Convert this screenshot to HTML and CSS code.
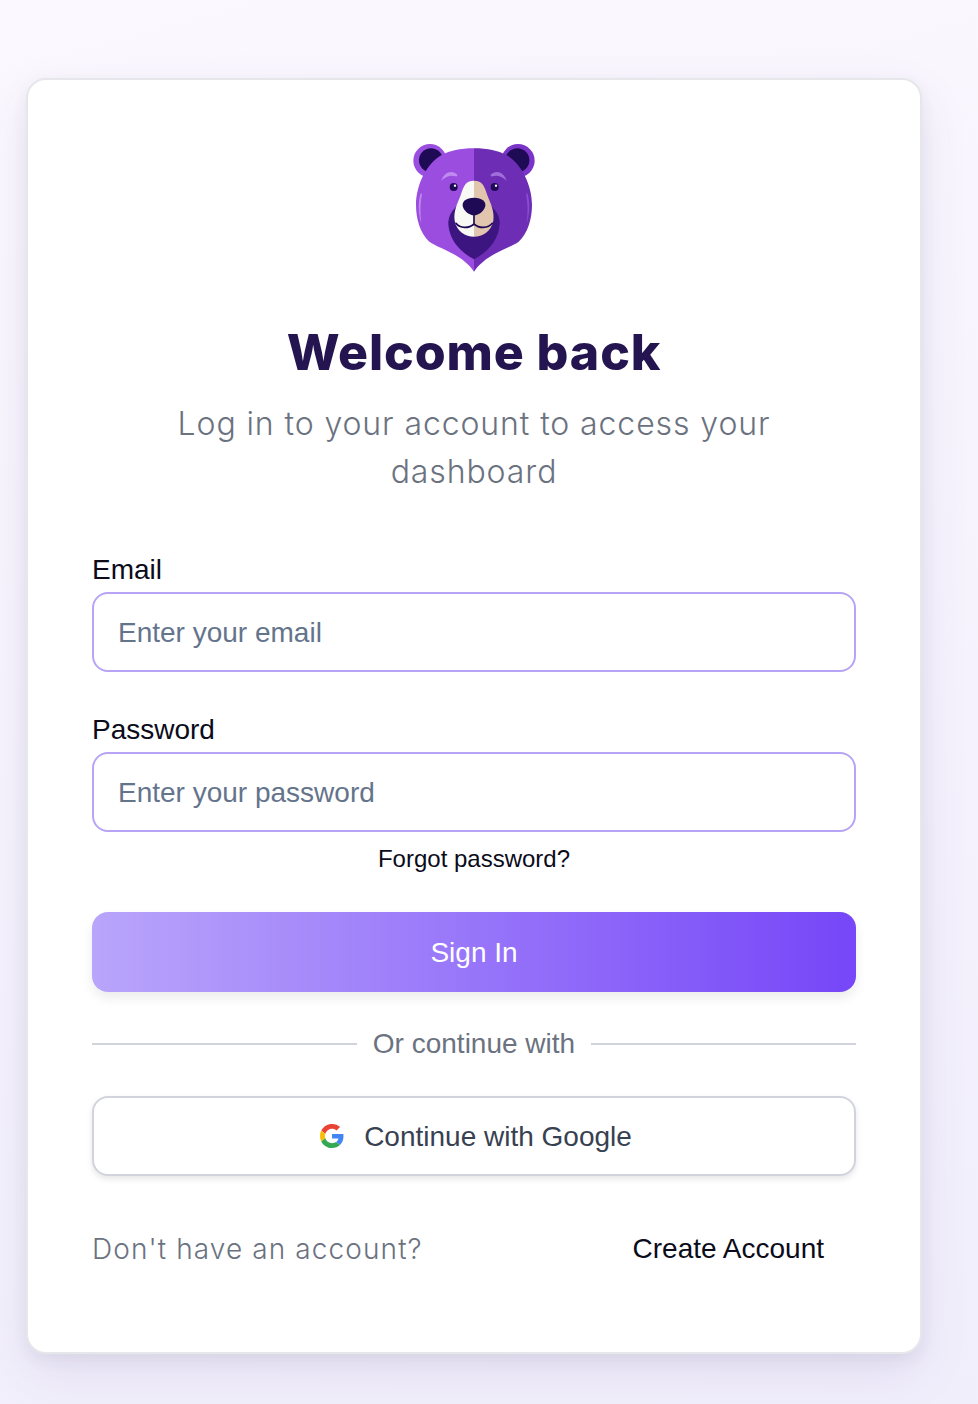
FILE: index.html
```html
<!DOCTYPE html>
<html lang="en">
  <head>
    <meta charset="UTF-8" />
    <meta name="viewport" content="width=device-width, initial-scale=1.0" />
    <title>Welcome back</title>
    <link rel="stylesheet" href="styles.css">
  </head>
  <body>
    <div class="card">
      <svg class="logo" viewBox="0 0 450 450" width="150" height="150">
        <circle cx="90" cy="92" r="50" fill="#9a4fe0"/>
        <circle cx="354" cy="92" r="50" fill="#7a35c8"/>
        <circle cx="93" cy="91" r="36" fill="#1f0a55"/>
        <circle cx="352" cy="91" r="36" fill="#1f0a55"/>
        <path d="M222 55C180 55 150 62 125 75C80 100 48 165 48 225C48 265 60 310 88 335C115 355 185 370 222 425Z" fill="#9b4de0"/>
        <path d="M222 55C264 55 294 62 319 75C364 100 396 165 396 225C396 265 384 310 356 335C329 355 259 370 222 425Z" fill="#6d2db5"/>
        <path d="M62 190C54 215 54 250 64 280C60 250 60 220 66 192Z" fill="#c08bee"/>
        <path d="M382 190C390 215 390 250 380 280C384 250 384 220 378 192Z" fill="#8a4fd2"/>
        <path d="M124 152C132 126 156 118 172 134C172 138 170 140 166 139C152 134 138 140 124 152Z" fill="#c08bee"/>
        <path d="M320 152C312 126 288 118 272 134C272 138 274 140 278 139C292 134 306 140 320 152Z" fill="#a06ddb"/>
        <path d="M222 388C180 366 148 330 145 282C144 252 165 215 222 215C279 215 300 252 299 282C296 330 264 366 222 388Z" fill="#3d1580"/>
        <path d="M222 152C196 152 190 170 182 196C172 222 160 244 164 272C170 304 196 320 222 320Z" fill="#f8f8f5"/>
        <path d="M222 152C248 152 254 170 262 196C272 222 284 244 280 272C274 304 248 320 222 320Z" fill="#e2c5ae"/>
        <path d="M222 203C246 203 258 214 256 228C252 244 236 256 222 256C208 256 192 244 188 228C186 214 198 203 222 203Z" fill="#1f0a55"/>
        <path d="M222 254V280M168 280C180 296 206 296 222 282C238 296 264 296 277 280" fill="none" stroke="#1f0a55" stroke-width="5" stroke-linecap="round"/>
        <circle cx="161" cy="171" r="12" fill="#1f0a55"/>
        <circle cx="284" cy="171" r="12" fill="#1f0a55"/>
        <circle cx="165" cy="167" r="3.5" fill="#fff"/>
        <circle cx="288" cy="167" r="3.5" fill="#fff"/>
      </svg>
      <h1 class="title">Welcome back</h1>
      <p class="subtitle">Log in to your account to access your dashboard</p>

      <form class="form">
        <label class="label" for="email">Email</label>
        <input class="field" type="email" id="email" placeholder="Enter your email" />
        <label class="label second" for="password">Password</label>
        <input class="field" type="password" id="password" placeholder="Enter your password" />
        <a class="forgot" href="#">Forgot password?</a>
        <button class="signin" type="button">Sign In</button>
      </form>

      <div class="divider"><span class="divider-text">Or continue with</span></div>

      <button class="google" type="button">
        <svg class="google-icon" viewBox="0 0 48 48" width="24" height="24">
          <path fill="#EA4335" d="M24 9.5c3.5 0 6.7 1.2 9.2 3.6l6.9-6.9C35.9 2.4 30.5 0 24 0 14.6 0 6.5 5.4 2.6 13.2l8 6.2C12.5 13.7 17.8 9.5 24 9.5z"/>
          <path fill="#4285F4" d="M46.98 24.55c0-1.57-.15-3.09-.38-4.55H24v9.02h12.94c-.58 2.96-2.26 5.48-4.78 7.18l7.73 6c4.51-4.18 7.09-10.36 7.09-17.65z"/>
          <path fill="#FBBC05" d="M10.53 28.59c-.48-1.45-.76-2.99-.76-4.59s.27-3.14.76-4.59l-7.98-6.19C.92 16.46 0 20.12 0 24c0 3.88.92 7.54 2.56 10.78l7.97-6.19z"/>
          <path fill="#34A853" d="M24 48c6.48 0 11.93-2.13 15.89-5.81l-7.73-6c-2.15 1.45-4.92 2.3-8.16 2.3-6.26 0-11.57-4.22-13.47-9.91l-7.98 6.19C6.51 42.62 14.62 48 24 48z"/>
        </svg>
        Continue with Google
      </button>

      <div class="footer">
        <span class="footer-text">Don't have an account?</span>
        <a class="create" href="#">Create Account</a>
      </div>
    </div>
  </body>
</html>
```

FILE: styles.css
```css
html, body {
  height: 100%;
}
body {
  margin: 0;
  height: 1404px;
  overflow: hidden;
  box-sizing: border-box;
  padding: 78px 56px 0 26px;
  background: linear-gradient(165deg, #fbf8ff 0%, #f1eefc 100%);
  font-family: "Liberation Sans", Arial, sans-serif;
}
.card {
  box-sizing: border-box;
  width: 896px;
  height: 1276px;
  padding: 50px 64px 0;
  display: flex;
  flex-direction: column;
  background: white;
  border: 2px solid #e5e7eb;
  border-radius: 20px;
  box-shadow: 0 20px 50px rgba(80, 70, 130, 0.1), 0 6px 16px rgba(60, 60, 90, 0.07);
}
.logo {
  align-self: center;
  display: block;
  margin-left: 2px;
}
.title {
  margin: 44px 0 0;
  text-align: center;
  font-family: Inter, sans-serif;
  font-size: 50px;
  line-height: 56px;
  font-weight: 800;
  letter-spacing: 0.9px;
  color: #24144f;
}
.subtitle {
  margin: 20px auto 0;
  width: 640px;
  text-align: center;
  font-family: Inter, sans-serif;
  font-size: 32px;
  line-height: 48px;
  font-weight: 300;
  letter-spacing: 0.9px;
  color: #6b7280;
}
.form {
  display: flex;
  flex-direction: column;
  margin-top: 54px;
}
.label {
  font-size: 28px;
  line-height: 40px;
  color: #0b0b1a;
  margin-bottom: 2px;
}
.second {
  margin-top: 38px;
}
.field {
  box-sizing: border-box;
  height: 80px;
  padding: 2px 24px 0;
  font-family: "Liberation Sans", Arial, sans-serif;
  font-size: 28px;
  border: 2px solid #b8a4f5;
  border-radius: 16px;
  outline: none;
}
.field::placeholder {
  color: #64748b;
  opacity: 1;
}
.forgot {
  margin-top: 13px;
  text-align: center;
  font-size: 24px;
  line-height: 28px;
  color: #0b0b1a;
  text-decoration: none;
}
.signin {
  height: 80px;
  margin-top: 39px;
  padding-top: 2px;
  border: none;
  border-radius: 16px;
  background: linear-gradient(90deg, #b9a5fb 0%, #7646f8 100%);
  color: white;
  font-family: "Liberation Sans", Arial, sans-serif;
  font-size: 28px;
  box-shadow: 0 6px 12px rgba(0, 0, 0, 0.08);
}
.divider {
  display: flex;
  align-items: center;
  gap: 16px;
  height: 32px;
  margin-top: 36px;
  font-size: 28px;
  line-height: 32px;
  color: #6b7280;
}
.divider-text {
  padding-bottom: 1px;
}
.divider::before, .divider::after {
  content: "";
  flex: 1;
  height: 2px;
  background: #d1d5db;
}
.google {
  display: flex;
  align-items: center;
  justify-content: center;
  gap: 20px;
  height: 80px;
  margin-top: 36px;
  padding: 2px 0 0 4px;
  background: white;
  border: 2px solid #d1d5db;
  border-radius: 16px;
  color: #374151;
  font-family: "Liberation Sans", Arial, sans-serif;
  font-size: 28px;
  box-shadow: 0 3px 6px rgba(0, 0, 0, 0.1);
}
.google-icon {
  margin-bottom: 2px;
}
.footer {
  display: flex;
  justify-content: space-between;
  align-items: center;
  margin-top: 56px;
}
.footer-text {
  font-family: Inter, sans-serif;
  font-size: 28px;
  font-weight: 300;
  letter-spacing: 1.1px;
  color: #6b7280;
}
.create {
  padding-right: 32px;
  font-size: 28px;
  color: #0b0b1a;
  text-decoration: none;
}
```
